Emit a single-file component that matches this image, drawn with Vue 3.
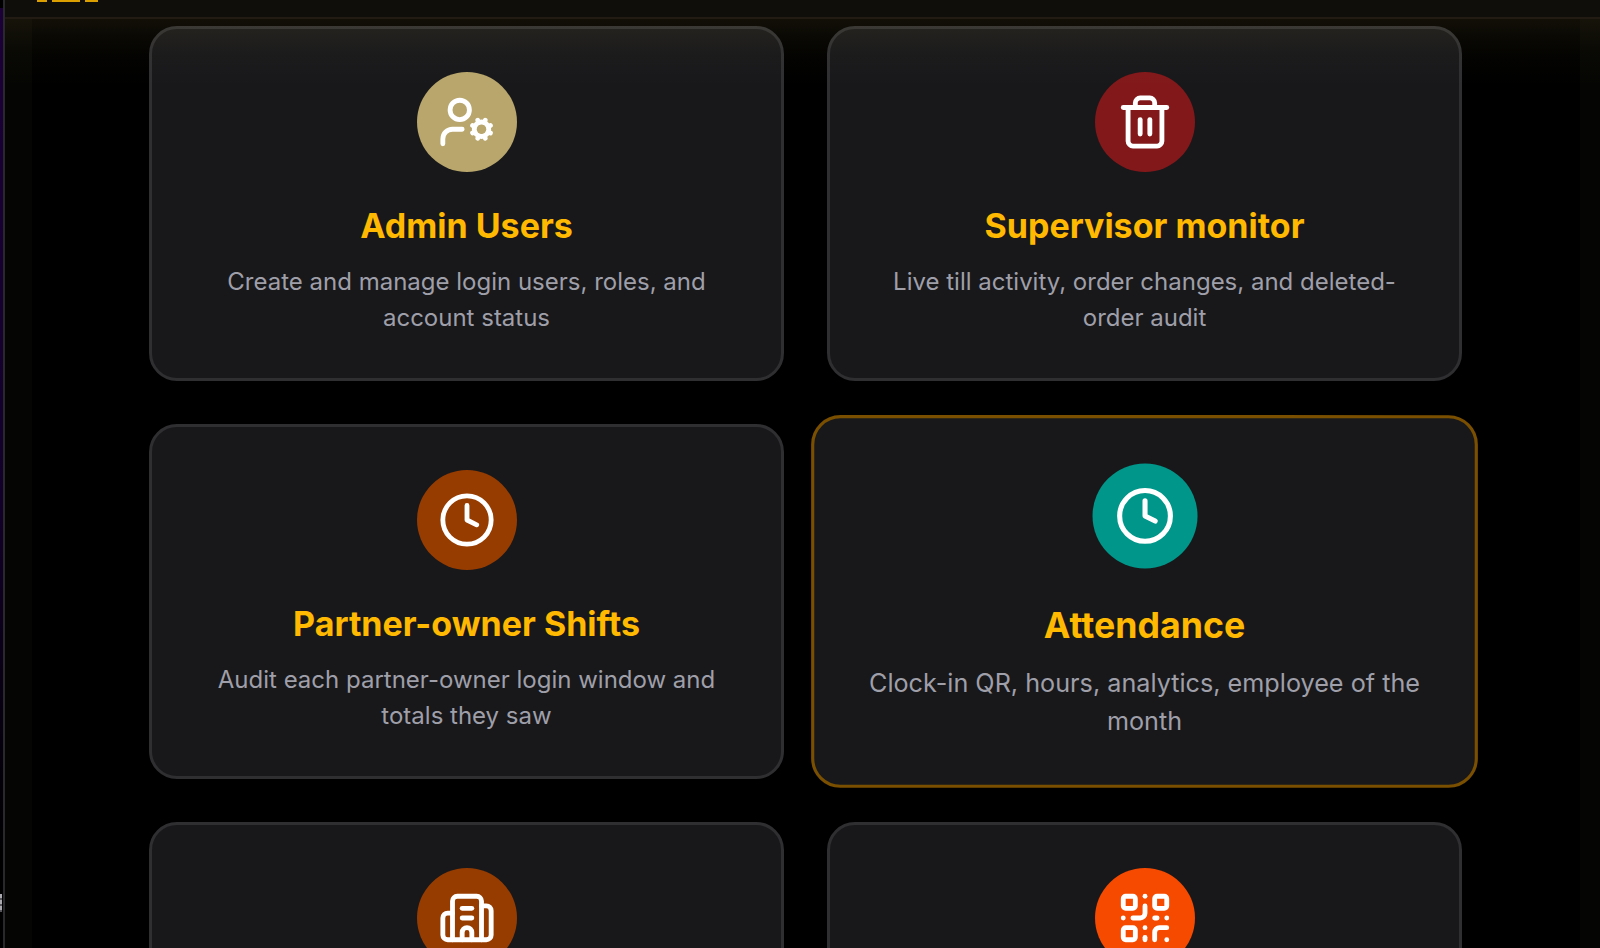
<script setup>
import { ref } from "vue";

const activeId = ref("attendance");

const cards = [
  {
    id: "admin-users",
    title: "Admin Users",
    text: "Create and manage login users, roles, and account status",
    icon: "userCog",
    tone: "sand",
  },
  {
    id: "supervisor",
    title: "Supervisor monitor",
    text: "Live till activity, order changes, and deleted-order audit",
    icon: "trash",
    tone: "red",
  },
  {
    id: "shifts",
    title: "Partner-owner Shifts",
    text: "Audit each partner-owner login window and totals they saw",
    icon: "clock",
    tone: "brown",
  },
  {
    id: "attendance",
    title: "Attendance",
    text: "Clock-in QR, hours, analytics, employee of the month",
    icon: "clock",
    tone: "teal",
  },
  { id: "branches", icon: "building", tone: "brown" },
  { id: "qr", icon: "qr", tone: "orange" },
];

const icons = {
  userCog: [
    "M10 15H6a4 4 0 0 0-4 4v2",
    "m14.305 16.53.923-.382",
    "m15.228 13.852-.923-.383",
    "m16.852 12.228-.383-.923",
    "m16.852 17.772-.383.924",
    "m19.148 12.228.383-.923",
    "m19.53 18.696-.382-.924",
    "m20.772 13.852.924-.383",
    "m20.772 16.148.924.383",
    "M21 15a3 3 0 1 1-6 0a3 3 0 1 1 6 0",
    "M13 7a4 4 0 1 1-8 0a4 4 0 1 1 8 0",
  ],
  trash: [
    "M3 6h18",
    "M19 6v14c0 1-1 2-2 2H7c-1 0-2-1-2-2V6",
    "M8 6V4c0-1 1-2 2-2h4c1 0 2 1 2 2v2",
    "M10 11v6",
    "M14 11v6",
  ],
  clock: ["M22 12a10 10 0 1 1-20 0a10 10 0 1 1 20 0", "M12 6v6l4 2"],
  building: [
    "M10 12h4",
    "M10 8h4",
    "M14 21v-3a2 2 0 0 0-4 0v3",
    "M6 10H4a2 2 0 0 0-2 2v7a2 2 0 0 0 2 2h16a2 2 0 0 0 2-2V9a2 2 0 0 0-2-2h-2",
    "M6 21V5a2 2 0 0 1 2-2h8a2 2 0 0 1 2 2v16",
  ],
  qr: [
    "M4 3h3a1 1 0 0 1 1 1v3a1 1 0 0 1-1 1H4a1 1 0 0 1-1-1V4a1 1 0 0 1 1-1z",
    "M17 3h3a1 1 0 0 1 1 1v3a1 1 0 0 1-1 1h-3a1 1 0 0 1-1-1V4a1 1 0 0 1 1-1z",
    "M4 16h3a1 1 0 0 1 1 1v3a1 1 0 0 1-1 1H4a1 1 0 0 1-1-1v-3a1 1 0 0 1 1-1z",
    "M21 16h-3a2 2 0 0 0-2 2v3",
    "M21 21v.01",
    "M12 7v3a2 2 0 0 1-2 2H7",
    "M3 12h.01",
    "M12 3h.01",
    "M12 16v.01",
    "M16 12h1",
    "M21 12v.01",
    "M12 21v-1",
  ],
};
</script>

<template>
  <div class="screen">
    <div class="edge">
      <span class="edge-handle"></span>
    </div>

    <div class="page">
      <header class="topbar">
        <div class="brand">
          <span class="brand-short"></span>
          <span class="brand-long"></span>
          <span class="brand-mid"></span>
        </div>
      </header>

      <main class="content">
        <a
          v-for="card in cards"
          :key="card.id"
          class="card"
          :class="{ active: card.id === activeId }"
          :href="'#' + card.id"
          :aria-label="card.title || card.id"
        >
          <span class="badge" :class="card.tone">
            <svg viewBox="0 0 24 24" aria-hidden="true">
              <path v-for="d in icons[card.icon]" :key="d" :d="d" />
            </svg>
          </span>
          <h2 v-if="card.title">{{ card.title }}</h2>
          <p v-if="card.text">{{ card.text }}</p>
        </a>
      </main>
    </div>
  </div>
</template>

<style>
body {
  background: #000;
}

#app {
  height: 100vh;
  overflow: hidden;
}
</style>

<style scoped>
.screen {
  display: flex;
  height: 100%;
  font-family: Inter, "Liberation Sans", sans-serif;
}

.edge {
  flex: none;
  width: 3px;
  border-right: 2px solid #29292c;
  background: linear-gradient(#000 8px, #1c0038 8px, #12002a 500px, #000 860px);
}

.edge-handle {
  display: block;
  width: 2px;
  height: 18px;
  margin-top: 894px;
  background: repeating-linear-gradient(#aaaaae 0 4px, #55555a 4px 6px);
}

.page {
  position: relative;
  flex: 1;
  min-width: 0;
  overflow: hidden;
  background: #050503;
}

.topbar {
  position: relative;
  z-index: 2;
  height: 17px;
  border-bottom: 2px solid #211b14;
  background: #0f0e0b;
}

/* amber glow that falls from the bar over the cards */
.topbar::after {
  content: "";
  position: absolute;
  top: 19px;
  left: 0;
  right: 0;
  height: 68px;
  background: linear-gradient(
    rgba(255, 215, 100, 0.07),
    rgba(255, 224, 90, 0.04) 18px,
    rgba(255, 224, 90, 0.015) 36px,
    transparent
  );
  pointer-events: none;
}

.brand {
  display: flex;
  gap: 5px;
  padding-left: 32px;
}

.brand span {
  height: 2px;
  background: #dc9f02;
}

.brand-short {
  width: 10px;
}

.brand-long {
  width: 28px;
}

.brand-mid {
  width: 13px;
}

.content {
  display: grid;
  grid-template-columns: 1fr 1fr;
  gap: 43px;
  margin: 0 20px 0 27px;
  padding: 7px 118px 43px 117px;
  background: #000;
}

.card {
  display: flex;
  flex-direction: column;
  align-items: center;
  box-sizing: border-box;
  min-height: 355px;
  padding: 43px 43px 42px;
  border: 3px solid #2f2f32;
  border-radius: 28px;
  background: #18181b;
  text-align: center;
  text-decoration: none;
}

.card.active {
  border-color: #7a4f00;
  transform: scale(1.05);
}

.badge {
  display: flex;
  align-items: center;
  justify-content: center;
  width: 100px;
  height: 100px;
  border-radius: 50%;
}

.badge svg {
  width: 58px;
  height: 58px;
  fill: none;
  stroke: #fff;
  stroke-width: 2;
  stroke-linecap: round;
  stroke-linejoin: round;
}

.sand {
  background: #b8a66c;
}

.red {
  background: #82181a;
}

.brown {
  background: #973c00;
}

.teal {
  background: #009689;
}

.orange {
  background: #f54a00;
}

h2 {
  margin: 29px 0 13px;
  color: #ffb900;
  font-size: 34px;
  font-weight: 700;
  line-height: 50px;
}

p {
  margin: 0;
  color: #9f9fa9;
  font-size: 24px;
  line-height: 36px;
}
</style>
